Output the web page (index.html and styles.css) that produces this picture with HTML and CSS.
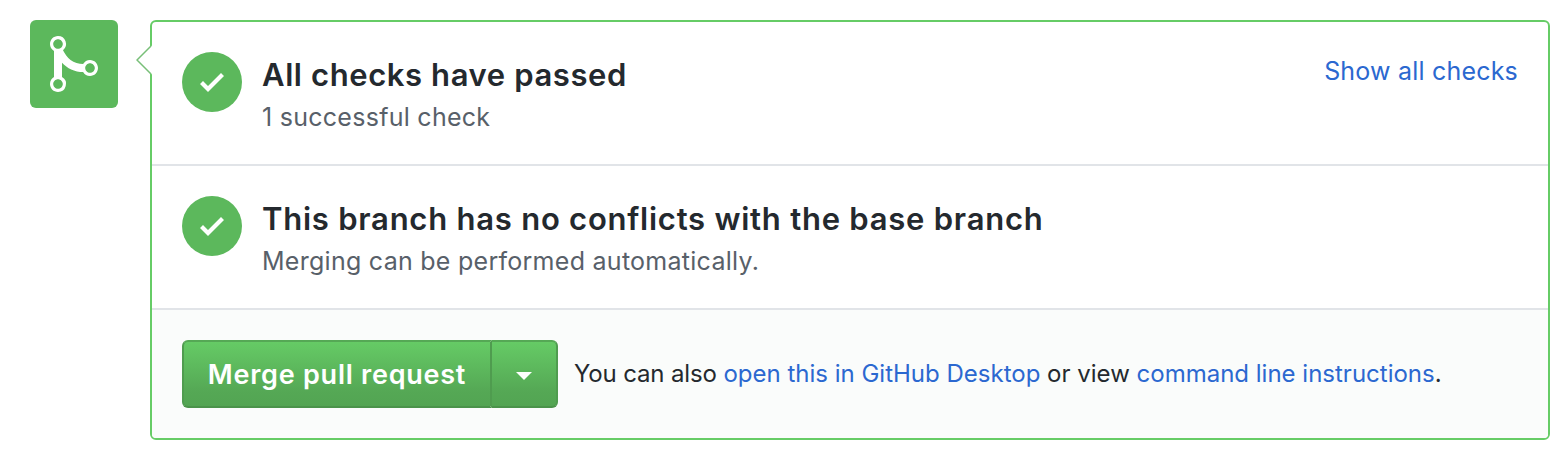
FILE: index.html
```html
<!DOCTYPE html>
<html lang="en">
<head>
<meta charset="utf-8">
<title>Merge pull request</title>
<link rel="stylesheet" href="styles.css">
</head>
<body>
<main class="merge-pr">
  <div class="avatar">
    <svg class="merge-icon" viewBox="0 0 12 16" aria-hidden="true"><path fill="currentColor" fill-rule="evenodd" d="M10 7c-.73 0-1.38.41-1.73 1.02V8C7.22 7.98 6 7.64 5.14 6.98c-.75-.58-1.5-1.61-1.89-2.44A1.993 1.993 0 0 0 2 .99C.89.99 0 1.89 0 3a2 2 0 0 0 1 1.72v6.56c-.59.35-1 .99-1 1.72 0 1.11.89 2 2 2a1.993 1.993 0 0 0 1-3.72V7.67c.67.7 1.44 1.27 2.3 1.69.86.42 2.03.63 2.97.64v-.02c.36.61 1 1.02 1.73 1.02 1.11 0 2-.89 2-2 0-1.11-.89-2-2-2zm-6.8 6c0 .66-.55 1.2-1.2 1.2-.65 0-1.2-.55-1.2-1.2 0-.65.55-1.2 1.2-1.2.65 0 1.2.55 1.2 1.2zm0-10c0 .66-.55 1.2-1.2 1.2C1.35 4.2.8 3.65.8 3c0-.65.55-1.2 1.2-1.2.65 0 1.2.55 1.2 1.2zm6.8 7.2c-.65 0-1.2-.55-1.2-1.2 0-.65.55-1.2 1.2-1.2.65 0 1.2.55 1.2 1.2 0 .66-.54 1.2-1.2 1.2z"/></svg>
  </div>
  <section class="panel">
    <svg class="caret" viewBox="0 0 16 30" aria-hidden="true"><path class="caret-fill" d="M16 0.5 L1.2 15 L16 29.5z"/><path class="caret-line" d="M15 1 L1 15 L15 29"/></svg>
    <div class="item">
      <span class="status"><svg class="check" viewBox="0 0 12 16" aria-hidden="true"><path fill="currentColor" d="M12 5l-8 8-4-4 1.5-1.5L4 10l6.5-6.5L12 5z"/></svg></span>
      <div class="copy">
        <h2 class="title title-checks">All checks have passed</h2>
        <p class="sub">1 successful check</p>
      </div>
      <a class="link toggle">Show all checks</a>
    </div>
    <div class="item">
      <span class="status"><svg class="check" viewBox="0 0 12 16" aria-hidden="true"><path fill="currentColor" d="M12 5l-8 8-4-4 1.5-1.5L4 10l6.5-6.5L12 5z"/></svg></span>
      <div class="copy">
        <h2 class="title">This branch has no conflicts with the base branch</h2>
        <p class="sub">Merging can be performed automatically.</p>
      </div>
    </div>
    <div class="footer">
      <div class="buttons">
        <button class="btn btn-main">Merge pull request</button>
        <button class="btn btn-more" aria-label="Select merge method"><span class="arrow"></span></button>
      </div>
      <p class="hint"><span class="lead">You can also</span> <a class="link">open this in GitHub Desktop</a> or view <a class="link">command line instructions</a>.</p>
    </div>
  </section>
</main>
</body>
</html>
```
FILE: styles.css
```css
* { box-sizing: border-box; }
body {
  margin: 0;
  background: #fff;
  color: #24292e;
  font-family: Inter, "Liberation Sans", sans-serif;
  font-variant-ligatures: none;
}
.merge-pr {
  display: flex;
  align-items: flex-start;
  gap: 32px;
  padding: 20px 18px 22px 30px;
}
.avatar {
  display: flex;
  align-items: center;
  justify-content: center;
  width: 88px;
  height: 88px;
  border-radius: 6px;
  background: #5cb85c;
  color: #fff;
}
.merge-icon { width: 48px; height: 64px; }
.panel {
  position: relative;
  flex: 1;
  height: 420px;
  border: 2px solid #66cc66;
  border-radius: 6px;
}
.caret {
  position: absolute;
  left: -16px;
  top: 23px;
  width: 16px;
  height: 30px;
}
.caret-fill { fill: #fff; }
.caret-line { fill: none; stroke: #78bf78; stroke-width: 1.5; }
.item {
  display: flex;
  align-items: flex-start;
  height: 144px;
  padding: 30px;
  border-bottom: 2px solid #e1e4e8;
}
.status {
  display: flex;
  align-items: center;
  justify-content: center;
  width: 60px;
  height: 60px;
  margin-right: 20px;
  border-radius: 50%;
  background: #5cb85c;
  color: #fff;
}
.check { width: 24px; height: 32px; }
.copy { flex: 1; }
.title {
  margin: 0;
  font-size: 31px;
  font-weight: 600;
  line-height: 46px;
  letter-spacing: 0.76px;
}
.title-checks { letter-spacing: 0.6px; }
.sub {
  margin: 0;
  color: #586069;
  font-size: 25px;
  line-height: 39px;
  letter-spacing: 0.27px;
}
.link { color: #2b68d0; }
.toggle { font-size: 25px; line-height: 39px; letter-spacing: 0.2px; }
.footer {
  display: flex;
  align-items: center;
  gap: 16px;
  height: 128px;
  padding: 0 30px;
  border-radius: 0 0 4px 4px;
  background: #fafcfb;
}
.buttons { display: flex; }
.btn {
  height: 68px;
  margin: 0;
  padding: 1px 0 0;
  border: 2px solid;
  border-color: #55a855 #4f9c4f #4a934a;
  background: linear-gradient(#66cc66, #55a855 75%, #52a452) border-box;
  color: #fff;
  font: 600 27px/63px Inter, "Liberation Sans", sans-serif;
  letter-spacing: 0.75px;
}
.btn-main { width: 310px; border-radius: 6px 0 0 6px; }
.btn-more {
  display: flex;
  align-items: center;
  justify-content: center;
  width: 66px;
  border-left: 0;
  border-radius: 0 6px 6px 0;
}
.arrow {
  margin-top: 3px;
  border: 8px solid transparent;
  border-top-color: #fff;
  border-bottom: 0;
}
.hint { margin: 0; font-size: 24px; line-height: 36px; white-space: nowrap; }
.lead { letter-spacing: -0.15px; }
```
